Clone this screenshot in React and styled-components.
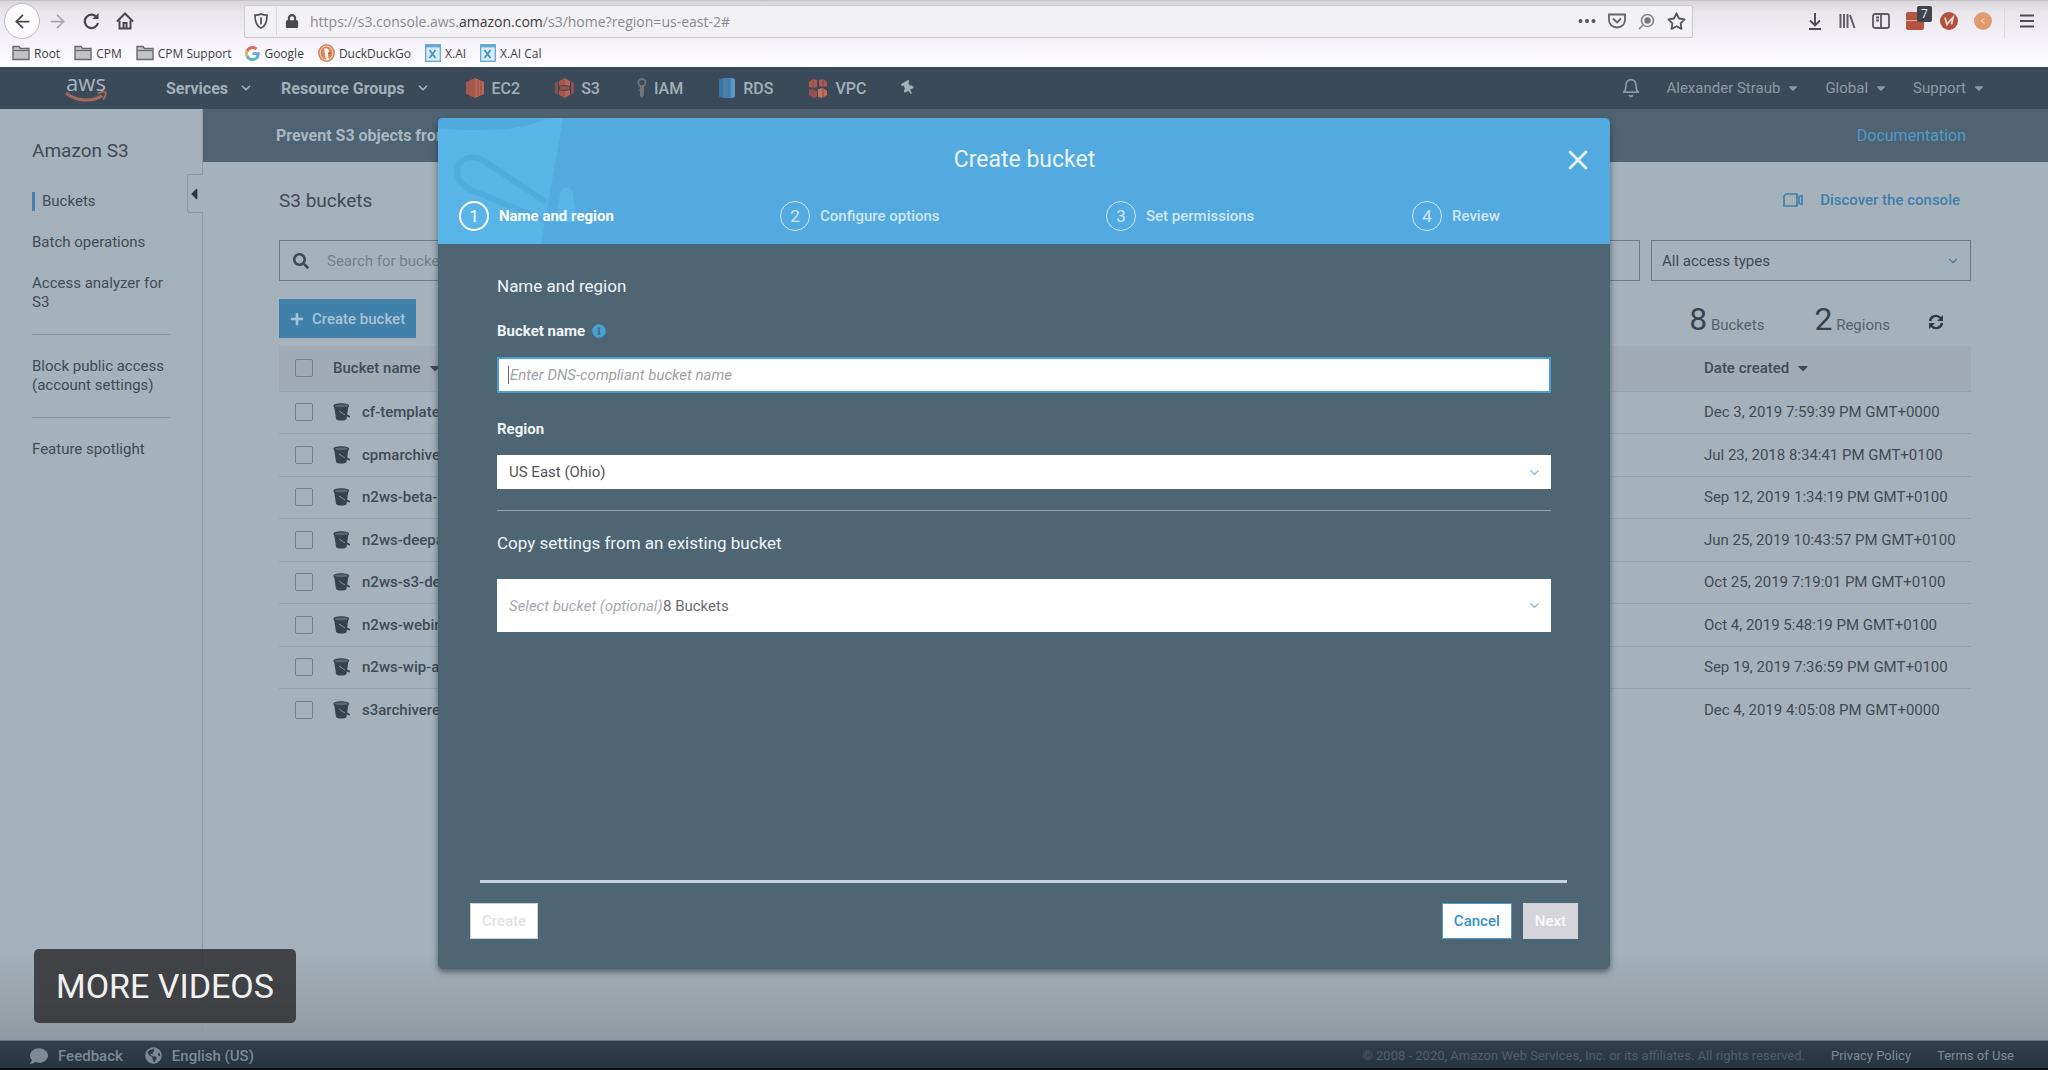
import React from "react";
import styled, { createGlobalStyle } from "styled-components";
import {
  FaCaretDown,
  FaCaretLeft,
  FaComment,
  FaGlobeAmericas,
  FaInfoCircle,
  FaLock,
  FaPlus,
  FaSearch,
  FaThumbtack,
} from "react-icons/fa";
import { FiArrowLeft, FiArrowRight, FiBell, FiChevronDown, FiX } from "react-icons/fi";

const bookmarks = [
  { name: "Root", icon: "folder" },
  { name: "CPM", icon: "folder" },
  { name: "CPM Support", icon: "folder" },
  { name: "Google", icon: "google" },
  { name: "DuckDuckGo", icon: "duck" },
  { name: "X.AI", icon: "xai" },
  { name: "X.AI Cal", icon: "xai" },
];

const services = ["EC2", "S3", "IAM", "RDS", "VPC"];

const buckets = [
  { name: "cf-template", date: "Dec 3, 2019 7:59:39 PM GMT+0000" },
  { name: "cpmarchive", date: "Jul 23, 2018 8:34:41 PM GMT+0100" },
  { name: "n2ws-beta-", date: "Sep 12, 2019 1:34:19 PM GMT+0100" },
  { name: "n2ws-deepa", date: "Jun 25, 2019 10:43:57 PM GMT+0100" },
  { name: "n2ws-s3-de", date: "Oct 25, 2019 7:19:01 PM GMT+0100" },
  { name: "n2ws-webin", date: "Oct 4, 2019 5:48:19 PM GMT+0100" },
  { name: "n2ws-wip-a", date: "Sep 19, 2019 7:36:59 PM GMT+0100" },
  { name: "s3archivere", date: "Dec 4, 2019 4:05:08 PM GMT+0000" },
];

const steps = ["Name and region", "Configure options", "Set permissions", "Review"];

const BookmarkIcon = ({ type }) => {
  if (type === "folder") {
    return (
      <svg width="18" height="16" viewBox="0 0 18 16">
        <path d="M1 14.5V1.5h6l1.5 2H17v11z" fill="#c3c2c6" stroke="#6b6a70" strokeWidth="1.4" />
        <path d="M1.5 5.5h15" stroke="#6b6a70" strokeWidth="1.2" />
      </svg>
    );
  }
  if (type === "google") {
    return (
      <svg width="15" height="15" viewBox="0 0 48 48">
        <path fill="#dd6b5e" d="M24 9.500c3.500 0 6.700 1.200 9.200 3.600l6.900-6.900C35.900 2.400 30.500 0 24 0 14.600 0 6.500 5.400 2.600 13.200l8 6.200C12.400 13.700 17.700 9.500 24 9.500z" />
        <path fill="#6aa5d8" d="M47 24.600c0-1.600-.2-3.100-.4-4.600H24v9h12.900c-.6 3-2.200 5.500-4.700 7.200l7.700 6C44.400 38 47 31.800 47 24.600z" />
        <path fill="#e2b45a" d="M10.500 28.600A14.500 14.500 0 0 1 10.500 19.400l-8-6.200a24 24 0 0 0 0 21.600z" />
        <path fill="#6ab0b8" d="M24 48c6.500 0 11.900-2.100 15.900-5.800l-7.700-6c-2.200 1.500-4.900 2.300-8.200 2.300-6.300 0-11.600-4.200-13.500-9.900l-8 6.200C6.500 42.600 14.600 48 24 48z" />
      </svg>
    );
  }
  if (type === "duck") {
    return (
      <svg width="17" height="18" viewBox="0 0 17 18">
        <ellipse cx="8.500" cy="9" rx="8.500" ry="9" fill="#d9865f" />
        <ellipse cx="8.500" cy="9" rx="6.400" ry="7" fill="none" stroke="#f3d9cc" strokeWidth="1" />
        <path d="M6 4.500c3-1 5.500.5 5 4-.3 1.500-1 2-1 3l1 4-3 .5z" fill="#fbf3ee" />
        <path d="M10 8.500h3v1.500h-3z" fill="#c65b3a" />
      </svg>
    );
  }
  return (
    <svg width="16" height="18" viewBox="0 0 16 18">
      <rect x=".7" y=".7" width="14.600" height="16.600" fill="#dcecf6" stroke="#62a9d4" strokeWidth="1.300" />
      <path d="M1 2.200h14" stroke="#62a9d4" strokeWidth="2.400" />
      <path d="M4.500 6l6 8M10.500 6l-6 8" stroke="#3f93c8" strokeWidth="1.800" />
    </svg>
  );
};

const ServiceIcon = ({ name }) => {
  switch (name) {
    case "EC2":
      return (
        <svg width="20" height="20" viewBox="0 0 20 20">
          <path d="M10 0l9 4v12l-9 4-9-4V4z" fill="#a4564f" />
          <path d="M10 0l9 4v12l-9 4z" fill="#bb6555" />
          <path d="M13 2.500v15M16 3.500v13" stroke="#8c4d4b" strokeWidth="1" />
        </svg>
      );
    case "S3":
      return (
        <svg width="19" height="20" viewBox="0 0 19 20">
          <path d="M0 5l3-1.500v13L0 15zM19 5l-3-1.500v13l3-1.500z" fill="#8d4f4e" />
          <path d="M9.500 0L4 3v5l5.500-1zM9.500 20L4 17v-5l5.500 1z" fill="#a9574d" />
          <path d="M9.500 0L15 3v5l-5.500-1zM9.500 20l5.500-3v-5l-5.500 1z" fill="#bb6153" />
          <path d="M5 8.500l4.500-.5 4.500.5v3l-4.500.5-4.500-.5z" fill="#98504c" />
        </svg>
      );
    case "IAM":
      return (
        <svg width="12" height="20" viewBox="0 0 12 20">
          <circle cx="7" cy="4.500" r="3.600" fill="none" stroke="#6c7277" strokeWidth="2" />
          <path d="M5 7.500h4V17l-2 3-2-2z" fill="#71777c" />
          <path d="M3 9h2M3 12h2" stroke="#5d666e" strokeWidth="1.500" />
        </svg>
      );
    case "RDS":
      return (
        <svg width="18" height="22" viewBox="0 0 18 22">
          <path d="M1 2.500L5 1h9l3 1.500v17L14 21H5l-4-1.500z" fill="#3f73a0" />
          <path d="M5 1h8v20H5z" fill="#467fae" />
          <path d="M13 1h1l3 1.500v17L14 21h-1z" fill="#5c9bc6" />
        </svg>
      );
    default:
      return (
        <svg width="20" height="21" viewBox="0 0 20 21">
          <path d="M1 4l4-3 4 1v7L5 10 1 9zM11 2l4-1 4 3v4l-4 1-4-1z" fill="#ad5a51" />
          <path d="M1 11l5 1 3 1v6l-3 1-5-3z" fill="#9b504d" />
          <path d="M10 11l5-1 4 3v4l-5 3-4-1z" fill="#c57059" />
          <path d="M5 1v19M15 1v19" stroke="#84494c" strokeWidth="1" />
        </svg>
      );
  }
};

const BucketIcon = () => (
  <svg width="18" height="18" viewBox="0 0 18 18">
    <path d="M1 2.500l2 13.500c1.500 2 9 2 10.500 0L15.500 2.500z" fill="#36434d" />
    <ellipse cx="8.250" cy="2.800" rx="7.300" ry="2" fill="#5b6973" stroke="#36434d" strokeWidth="1.200" />
    <path d="M8 9l8 4.500" stroke="#36434d" strokeWidth="2" strokeLinecap="round" />
    <path d="M6 8l6 4" stroke="#85929b" strokeWidth="1" />
  </svg>
);

const App = () => {
  return (
    <Page>
      <GlobalStyle />

      <Browser>
        <Toolbar>
          <BackButton aria-label="Back">
            <FiArrowLeft size={21} />
          </BackButton>
          <ToolButton aria-label="Forward" $color="#a9a8ae">
            <FiArrowRight size={21} />
          </ToolButton>
          <ToolButton aria-label="Reload">
            <svg width="17" height="18" viewBox="0 0 17 18" fill="none" stroke="currentColor" strokeWidth="2.200">
              <path d="M14 5.500A6.700 6.700 0 1 0 15 11" />
              <path d="M15.500 1v6H9.500z" fill="currentColor" stroke="none" />
            </svg>
          </ToolButton>
          <ToolButton aria-label="Home">
            <svg width="18" height="18" viewBox="0 0 18 18" fill="none" stroke="currentColor" strokeWidth="2">
              <path d="M1 9.500L9 1.500l8 8" />
              <path d="M3.500 8.500V16.500h11V8.500" />
              <path d="M7.500 16v-5h3v5" />
            </svg>
          </ToolButton>
          <AddressBar>
            <svg width="14" height="16" viewBox="0 0 14 16" fill="none" stroke="#504f56" strokeWidth="1.700">
              <path d="M1 2.200C4 2.200 5.500 1.800 7 1c1.500.8 3 1.200 6 1.200C13 8.500 12 13 7 15 2 13 1 8.500 1 2.200z" />
              <path d="M7 4.500v7" />
            </svg>
            <Separator />
            <FaLock size={14} color="#4a494f" />
            <Url>
              https://s3.console.aws.<b>amazon.com</b>/s3/home?region=us-east-2#
            </Url>
            <UrlActions>
              <svg width="18" height="18" viewBox="0 0 18 18" fill="#55545b">
                <circle cx="2.500" cy="9" r="2" />
                <circle cx="9" cy="9" r="2" />
                <circle cx="15.500" cy="9" r="2" />
              </svg>
              <svg width="18" height="16" viewBox="0 0 18 16" fill="none" stroke="#66656b" strokeWidth="1.800">
                <path d="M1 1.500h16V7c0 4.500-3.500 7.500-8 7.500S1 11.500 1 7z" />
                <path d="M5 5.500l4 4 4-4" />
              </svg>
              <svg width="17" height="17" viewBox="0 0 17 17" fill="none" stroke="#89888e" strokeWidth="1.700">
                <circle cx="9.500" cy="7.500" r="6" />
                <path d="M5 12l-4 4" />
                <circle cx="9.500" cy="7.500" r="3.200" fill="#77767c" stroke="none" />
              </svg>
              <svg width="19" height="18" viewBox="0 0 19 18" fill="none" stroke="#55545b" strokeWidth="1.800" strokeLinejoin="round">
                <path d="M9.500 1.300l2.500 5.200 5.600.8-4 4 .9 5.600-5-2.700-5 2.700.9-5.600-4-4 5.600-.8z" />
              </svg>
            </UrlActions>
          </AddressBar>
          <Extensions>
            <svg width="16" height="17" viewBox="0 0 16 17" fill="none" stroke="#4c4b52" strokeWidth="1.900">
              <path d="M8 0v12M3 7.500l5 5 5-5M2 16h12" />
            </svg>
            <svg width="17" height="16" viewBox="0 0 17 16" fill="none" stroke="#5f5e64" strokeWidth="2">
              <path d="M1.500 1v14M5 1v14M8.500 1v14M11 2l4.500 13" />
            </svg>
            <svg width="18" height="16" viewBox="0 0 18 16" fill="none" stroke="#5b5a61" strokeWidth="1.800">
              <rect x="1" y="1" width="16" height="14" rx="2" />
              <path d="M9 1v14M4 4.500h3M4 7.500h3" />
            </svg>
            <Blocker>
              <BlockerCount>7</BlockerCount>
            </Blocker>
            <svg width="18" height="18" viewBox="0 0 18 18">
              <circle cx="9" cy="9" r="9" fill="#b3503f" />
              <path d="M5 5.500l2 7 3-4 3-3-1.500 7" fill="none" stroke="#f2d8d0" strokeWidth="1.800" />
            </svg>
            <svg width="18" height="18" viewBox="0 0 18 18">
              <circle cx="9" cy="9" r="9" fill="#e09a70" />
              <path d="M10.500 6.500L7.500 9l3 2.500" fill="none" stroke="#f1c6ab" strokeWidth="1.500" />
            </svg>
            <MenuButton aria-label="Open menu">
              <svg width="14" height="14" viewBox="0 0 14 14" stroke="#4c4b52" strokeWidth="2">
                <path d="M0 1.500h14M0 7h14M0 12.500h14" />
              </svg>
            </MenuButton>
          </Extensions>
        </Toolbar>
        <Bookmarks>
          {bookmarks.map((item) => (
            <Bookmark href="#" key={item.name}>
              <BookmarkIcon type={item.icon} />
              {item.name}
            </Bookmark>
          ))}
        </Bookmarks>
      </Browser>

      <Nav>
        <Logo href="#">
          aws
          <svg width="44" height="12" viewBox="0 0 44 12" fill="none">
            <path d="M2 2c11 9 27 9 36 2.500" stroke="#a5675c" strokeWidth="3" />
            <path d="M34 2.500c4-2 7-2 7.500-1s0 4-2.500 7" stroke="#a5675c" strokeWidth="2" />
          </svg>
        </Logo>
        <NavMenu>
          <NavButton>
            Services <FiChevronDown size={14} strokeWidth={3} />
          </NavButton>
          <NavButton>
            Resource Groups <FiChevronDown size={14} strokeWidth={3} />
          </NavButton>
        </NavMenu>
        <Shortcuts>
          {services.map((name) => (
            <Shortcut href="#" key={name}>
              <ServiceIcon name={name} />
              {name}
            </Shortcut>
          ))}
          <Pin aria-label="Edit shortcuts">
            <FaThumbtack size={14} />
          </Pin>
        </Shortcuts>
        <Account>
          <FiBell size={20} />
          <AccountButton>
            Alexander Straub <FaCaretDown size={14} />
          </AccountButton>
          <AccountButton>
            Global <FaCaretDown size={14} />
          </AccountButton>
          <AccountButton>
            Support <FaCaretDown size={14} />
          </AccountButton>
        </Account>
      </Nav>

      <Body>
        <Sidebar>
          <SidebarTitle>Amazon S3</SidebarTitle>
          <SideLink href="#" $active>
            Buckets
          </SideLink>
          <SideLink href="#">Batch operations</SideLink>
          <SideLink href="#">Access analyzer for S3</SideLink>
          <SideRule />
          <SideLink href="#">Block public access (account settings)</SideLink>
          <SideRule />
          <SideLink href="#">Feature spotlight</SideLink>
          <Collapse aria-label="Collapse menu">
            <FaCaretLeft size={18} />
          </Collapse>
        </Sidebar>

        <Main>
          <Banner>
            <b>Prevent S3 objects from</b>
            <a href="#">Documentation</a>
          </Banner>
          <Content>
            <TitleRow>
              <h1>S3 buckets</h1>
              <Discover href="#">
                <svg width="20" height="14" viewBox="0 0 20 14" fill="none" stroke="currentColor" strokeWidth="1.600">
                  <path d="M3 1h11v12H1V3z" />
                  <path d="M16 3.500l3-1v9l-3-1z" />
                </svg>
                Discover the console
              </Discover>
            </TitleRow>
            <Filters>
              <SearchBox>
                <FaSearch size={16} />
                <input aria-label="Search for buckets" placeholder="Search for buckets" />
              </SearchBox>
              <AccessSelect>
                <select aria-label="Access type">
                  <option>All access types</option>
                </select>
                <FiChevronDown size={14} />
              </AccessSelect>
            </Filters>
            <Actions>
              <CreateBucket>
                <FaPlus size={14} /> Create bucket
              </CreateBucket>
              <Stats>
                <Stat>
                  <b>8</b> Buckets
                </Stat>
                <Stat>
                  <b>2</b> Regions
                </Stat>
                <Refresh aria-label="Refresh">
                  <svg width="16" height="16" viewBox="0 0 16 16" fill="none" stroke="currentColor" strokeWidth="2.400">
                    <path d="M2 7a6 6 0 0 1 10.500-3M14 9a6 6 0 0 1-10.500 3" />
                    <path d="M15 1v6H9zM1 15V9h6z" fill="currentColor" stroke="none" />
                  </svg>
                </Refresh>
              </Stats>
            </Actions>
            <Table>
              <thead>
                <tr>
                  <CheckCell as="th">
                    <Check type="checkbox" aria-label="Select all buckets" />
                  </CheckCell>
                  <th>
                    <HeadLabel>
                      Bucket name <FaCaretDown size={16} />
                    </HeadLabel>
                  </th>
                  <DateCell as="th">
                    <HeadLabel>
                      Date created <FaCaretDown size={16} />
                    </HeadLabel>
                  </DateCell>
                </tr>
              </thead>
              <tbody>
                {buckets.map((bucket) => (
                  <tr key={bucket.name}>
                    <CheckCell>
                      <Check type="checkbox" aria-label={bucket.name} />
                    </CheckCell>
                    <td>
                      <BucketLink href="#">
                        <BucketIcon />
                        {bucket.name}
                      </BucketLink>
                    </td>
                    <DateCell>{bucket.date}</DateCell>
                  </tr>
                ))}
              </tbody>
            </Table>
          </Content>
        </Main>
      </Body>

      <Footer>
        <FooterLink href="#" $strong>
          <FaComment size={18} /> Feedback
        </FooterLink>
        <FooterLink href="#" $strong>
          <FaGlobeAmericas size={17} /> English (US)
        </FooterLink>
        <Legal>
          <span>© 2008 - 2020, Amazon Web Services, Inc. or its affiliates. All rights reserved.</span>
          <FooterLink href="#">Privacy Policy</FooterLink>
          <FooterLink href="#">Terms of Use</FooterLink>
        </Legal>
      </Footer>

      <Overlay>
        <Modal role="dialog" aria-labelledby="modal-title">
          <ModalHeader>
            <HeaderArt width="140" height="126" viewBox="0 0 140 126" fill="none">
              <path d="M0 0h125l-22 126H0z" fill="#59b5e8" />
              <path d="M0 0h108C90 13 30 14 0 10z" fill="#50a9df" />
              <path
                d="M108 84L46 43C34 35 18 41 19 55c1 8 6 13 14 17l88 36"
                stroke="#52abe0"
                strokeWidth="6"
              />
              <path d="M118 104l4-28c1-9 12-9 13 0l4 28z" fill="#59b5e8" />
            </HeaderArt>
            <h2 id="modal-title">Create bucket</h2>
            <Close aria-label="Close">
              <FiX size={32} strokeWidth={2} />
            </Close>
            <Steps>
              {steps.map((step, i) => (
                <Step key={step} $active={i === 0}>
                  <StepNumber $active={i === 0}>{i + 1}</StepNumber>
                  {step}
                </Step>
              ))}
            </Steps>
          </ModalHeader>

          <ModalBody>
            <SectionTitle>Name and region</SectionTitle>
            <Label htmlFor="bucket-name">
              Bucket name <FaInfoCircle size={14} color="#4a9fd4" />
            </Label>
            <NameInput id="bucket-name" placeholder="Enter DNS-compliant bucket name" />
            <Label htmlFor="region">Region</Label>
            <Field>
              <select id="region">
                <option>US East (Ohio)</option>
              </select>
              <FiChevronDown size={15} />
            </Field>
            <Rule />
            <SectionTitle as="label" htmlFor="copy-from">
              Copy settings from an existing bucket
            </SectionTitle>
            <Field $tall>
              <select id="copy-from">
                <option>Select bucket (optional)</option>
              </select>
              <span>8 Buckets</span>
              <FiChevronDown size={15} />
            </Field>
          </ModalBody>

          <ModalFooter>
            <ModalButton disabled $color="#e2e2e6">
              Create
            </ModalButton>
            <ModalButton $color="#3c8fc4" $border="#4a9fd4">
              Cancel
            </ModalButton>
            <ModalButton disabled $color="#f8f8fa" $bg="#d5d4da">
              Next
            </ModalButton>
          </ModalFooter>
        </Modal>
      </Overlay>

      <MoreVideos>MORE VIDEOS</MoreVideos>
    </Page>
  );
};

const GlobalStyle = createGlobalStyle`
  * {
    box-sizing: border-box;
  }
  body {
    margin: 0;
    background: #a6b2bb;
    color: #3f4b55;
    font-family: Roboto, "Liberation Sans", sans-serif;
    font-size: 15px;
  }
  h1, h2, h3 {
    margin: 0;
    font-weight: 400;
  }
  a {
    color: inherit;
    text-decoration: none;
  }
  button, input, select {
    margin: 0;
    padding: 0;
    border: none;
    background: none;
    color: inherit;
    font: inherit;
  }
  select {
    appearance: none;
  }
  svg {
    flex: none;
  }
`;

const Page = styled.div`
  position: relative;
  display: flex;
  flex-direction: column;
  min-height: 100vh;
`;

const Browser = styled.header`
  background: linear-gradient(#d9d6dc, #e9e7ec 12px, #f5f3f9 40px, #fdfcff);
  border-top: 1px solid #c4c1c8;
  font-family: "Open Sans", "Noto Sans", sans-serif;
`;

const Toolbar = styled.div`
  display: flex;
  align-items: center;
  height: 40px;
  padding: 0 14px 0 4px;
  color: #47464c;
`;

const ToolButton = styled.button`
  display: flex;
  align-items: center;
  justify-content: center;
  width: 34px;
  height: 34px;
  color: ${(props) => props.$color || "#47464c"};
`;

const BackButton = styled(ToolButton)`
  width: 36px;
  height: 36px;
  border: 1px solid #bdbbc1;
  border-radius: 50%;
  background: #fbfafc;
`;

const AddressBar = styled.div`
  display: flex;
  flex: 1;
  align-items: center;
  gap: 8px;
  height: 33px;
  margin: 0 114px 0 102px;
  padding: 0 6px 0 9px;
  border: 1px solid #cbc9cf;
  border-radius: 2px;
  background: #f2f1f3;
`;

const Separator = styled.span`
  width: 1px;
  height: 28px;
  background: #dcdadf;
`;

const Url = styled.span`
  flex: 1;
  padding-left: 3px;
  color: #8b8a90;
  font-size: 14px;

  b {
    color: #3c3b41;
    font-weight: 500;
  }
`;

const UrlActions = styled.div`
  display: flex;
  align-items: center;
  gap: 12px;
`;

const Extensions = styled.div`
  display: flex;
  align-items: center;
  gap: 16px;
`;

const MenuButton = styled.button`
  display: flex;
  align-items: center;
  height: 34px;
  margin-left: -4px;
  padding-left: 15px;
  border-left: 1px solid #dcdadf;
`;

const Blocker = styled.span`
  position: relative;
  width: 18px;
  height: 18px;
  border-radius: 2px;
  background: linear-gradient(#b5533f 8px, #e2b0a2 8px, #e2b0a2 9px, #b5533f 9px);
`;

const BlockerCount = styled.span`
  position: absolute;
  top: -6px;
  left: 11px;
  width: 15px;
  height: 16px;
  border-radius: 2px;
  background: #3d444c;
  color: #f1f1f3;
  font-size: 12px;
  line-height: 16px;
  text-align: center;
`;

const Bookmarks = styled.nav`
  display: flex;
  align-items: center;
  gap: 14px;
  height: 26px;
  padding: 0 12px 2px;
`;

const Bookmark = styled.a`
  display: flex;
  align-items: center;
  gap: 4px;
  color: #3f3e44;
  font-size: 12px;
`;

const Nav = styled.nav`
  display: flex;
  align-items: center;
  height: 42px;
  padding: 0 62px 0 64px;
  background: #3a4a58;
  color: #a3b0ba;
  font-size: 16px;
`;

const Logo = styled.a`
  display: flex;
  flex-direction: column;
  align-items: center;
  width: 44px;
  color: #a9b5be;
  font-family: "Open Sans", sans-serif;
  font-size: 22px;
  font-weight: 500;
  line-height: 18px;
`;

const NavMenu = styled.div`
  display: flex;
  gap: 28px;
  padding: 0 35px 0 58px;
`;

const NavButton = styled.button`
  display: flex;
  align-items: center;
  gap: 11px;
  font-weight: 700;
`;

const Shortcuts = styled.div`
  display: flex;
  align-items: center;
  gap: 35px;
`;

const Shortcut = styled.a`
  display: flex;
  align-items: center;
  gap: 7px;
  font-weight: 500;
`;

const Pin = styled.button`
  display: flex;
  transform: rotate(-30deg);
`;

const Account = styled.div`
  display: flex;
  align-items: center;
  gap: 25px;
  margin-left: auto;
  color: #8b99a4;
`;

const AccountButton = styled.button`
  display: flex;
  align-items: center;
  gap: 6px;
  font-size: 15px;
`;

const Body = styled.div`
  display: flex;
  flex: 1;
  background: linear-gradient(transparent calc(100% - 90px), #8f99a2);
`;

const Sidebar = styled.aside`
  position: relative;
  width: 203px;
  padding: 30px 32px;
  border-right: 1px solid #8d99a3;
`;

const SidebarTitle = styled.h2`
  margin-bottom: 29px;
  font-size: 19px;
  line-height: 24px;
`;

const SideLink = styled.a`
  display: block;
  margin-bottom: 22px;
  padding-left: ${(props) => (props.$active ? "7px" : "0")};
  border-left: ${(props) => (props.$active ? "3px solid #4382ae" : "none")};
  line-height: 19px;
`;

const SideRule = styled.hr`
  height: 1px;
  margin: 0 0 22px;
  border: none;
  background: #87939d;
`;

/* sits on the sidebar's right border */
const Collapse = styled.button`
  position: absolute;
  top: 65px;
  right: -1px;
  display: flex;
  align-items: center;
  justify-content: flex-end;
  width: 16px;
  height: 39px;
  border: 1px solid #8d99a3;
  border-right: none;
  border-radius: 3px 0 0 3px;
  background: #a6b2bb;
  color: #2c3740;
`;

const Main = styled.main`
  flex: 1;
`;

const Banner = styled.div`
  display: flex;
  align-items: center;
  justify-content: space-between;
  height: 53px;
  padding: 0 82px 0 73px;
  background: #4f6372;
  color: #a9b7c1;
  font-size: 16px;

  b {
    font-weight: 700;
  }
  a {
    color: #4d9acb;
  }
`;

const Content = styled.div`
  padding: 26px 77px 0 76px;
`;

const TitleRow = styled.div`
  display: flex;
  align-items: center;
  justify-content: space-between;
  height: 24px;
  padding-right: 11px;

  h1 {
    font-size: 19px;
  }
`;

const Discover = styled.a`
  display: flex;
  align-items: center;
  gap: 17px;
  color: #3f7fab;
  font-weight: 500;
`;

const Filters = styled.div`
  display: flex;
  gap: 11px;
  margin-top: 28px;
`;

const SearchBox = styled.div`
  display: flex;
  flex: 1;
  align-items: center;
  gap: 18px;
  height: 41px;
  padding: 0 13px;
  border: 1px solid #6d7983;

  input {
    flex: 1;
    outline: none;
  }
  input::placeholder {
    color: #74808a;
  }
`;

const AccessSelect = styled.div`
  display: flex;
  align-items: center;
  width: 320px;
  height: 41px;
  padding: 0 10px;
  border: 1px solid #6d7983;

  select {
    flex: 1;
  }
  svg {
    color: #3f7fab;
  }
`;

const Actions = styled.div`
  display: flex;
  align-items: center;
  justify-content: space-between;
  margin-top: 18px;
`;

const CreateBucket = styled.button`
  display: flex;
  align-items: center;
  gap: 8px;
  height: 39px;
  padding: 0 11px;
  background: #4180aa;
  color: #a9c3d6;
  font-weight: 500;
`;

const Stats = styled.div`
  display: flex;
  align-items: baseline;
  gap: 50px;
  padding-right: 27px;
`;

const Stat = styled.span`
  color: #56636d;

  b {
    color: #36424c;
    font-size: 32px;
    font-weight: 400;
  }
`;

const Refresh = styled.button`
  color: #2f3a43;
  margin-left: -12px;
`;

const Table = styled.table`
  width: 100%;
  margin-top: 8px;
  border-collapse: collapse;

  th {
    height: 45px;
    padding: 0;
    background: #a1abb5;
    font-weight: 500;
    text-align: left;
  }
  td {
    height: 43px;
    padding: 0;
  }
  tr:nth-child(odd) td {
    height: 42px;
  }
  thead tr,
  tbody tr:not(:last-child) {
    border-bottom: 1px solid #95a1ab;
  }
`;

const CheckCell = styled.td`
  width: 54px;
`;

const DateCell = styled.td`
  width: 267px;
`;

const HeadLabel = styled.span`
  display: flex;
  align-items: center;
  gap: 6px;
`;

const Check = styled.input`
  display: block;
  width: 18px;
  height: 18px;
  margin-left: 16px;
  appearance: none;
  border: 1px solid #74808a;
  border-radius: 2px;
`;

const BucketLink = styled.a`
  display: flex;
  align-items: center;
  gap: 11px;
  font-weight: 500;
`;

const Footer = styled.footer`
  display: flex;
  align-items: center;
  gap: 22px;
  height: 30px;
  padding: 2px 34px 0 30px;
  border-top: 1px solid #6a757e;
  border-bottom: 2px solid #0a0d10;
  background: linear-gradient(#323f4b, #28343e);
`;

const FooterLink = styled.a`
  display: flex;
  align-items: center;
  gap: 10px;
  color: #7d8a94;
  font-size: ${(props) => (props.$strong ? "15px" : "13px")};
  font-weight: ${(props) => (props.$strong ? 500 : 400)};
`;

const Legal = styled.div`
  display: flex;
  align-items: center;
  gap: 26px;
  margin-left: auto;
  color: #505e69;
  font-size: 13px;
`;

const Overlay = styled.div`
  position: absolute;
  inset: 0;
  display: flex;
  align-items: flex-start;
  justify-content: center;
  padding-top: 118px;
`;

const Modal = styled.section`
  display: flex;
  flex-direction: column;
  width: 1172px;
  max-width: 90%;
  border-radius: 5px;
  overflow: hidden;
  background: #4e6573;
  box-shadow: 0 3px 6px rgba(30, 40, 50, 0.6);
`;

const ModalHeader = styled.header`
  position: relative;
  padding: 27px 20px 13px 21px;
  background: #52aae0;
  color: #e9f4fb;

  h2 {
    position: relative;
    font-size: 23px;
    line-height: 30px;
    text-align: center;
  }
`;

const HeaderArt = styled.svg`
  position: absolute;
  top: 0;
  left: 0;
`;

const Close = styled.button`
  position: absolute;
  top: 26px;
  right: 16px;
  display: flex;
`;

const Steps = styled.ol`
  position: relative;
  display: grid;
  grid-template-columns: 321fr 326fr 306fr 178fr;
  margin: 26px 0 0;
  padding: 0;
  list-style: none;
`;

const Step = styled.li`
  display: flex;
  align-items: center;
  gap: 10px;
  color: ${(props) => (props.$active ? "#ffffff" : "#cfe7f6")};
  font-weight: ${(props) => (props.$active ? 700 : 500)};
`;

const StepNumber = styled.span`
  width: 30px;
  height: 30px;
  border: ${(props) => (props.$active ? "2px" : "1px")} solid currentColor;
  border-radius: 50%;
  font-size: 17px;
  font-weight: 400;
  line-height: ${(props) => (props.$active ? "26px" : "28px")};
  text-align: center;
`;

const ModalBody = styled.div`
  display: flex;
  flex-direction: column;
  min-height: 636px;
  padding: 30px 59px 0;
  color: #f0f5f8;
`;

const SectionTitle = styled.h3`
  font-size: 17px;
  line-height: 24px;
`;

const Label = styled.label`
  display: flex;
  align-items: center;
  gap: 7px;
  margin: 23px 0 16px;
  font-weight: 700;
  line-height: 20px;

  input + & {
    margin-top: 26px;
  }
`;

/* the caret at the start of the field is painted as a 1px line */
const NameInput = styled.input`
  height: 36px;
  padding: 0 11px;
  border: 2px solid #4a9fd4;
  background: linear-gradient(#6b6a70, #6b6a70) 9px center / 1px 18px no-repeat #ffffff;
  color: #444;

  &::placeholder {
    color: #a09fa6;
    font-style: italic;
  }
`;

const Field = styled.div`
  display: flex;
  align-items: center;
  height: ${(props) => (props.$tall ? "53px" : "34px")};
  padding: 0 9px 0 12px;
  background: #ffffff;
  color: #6d6c72;

  select {
    flex: ${(props) => (props.$tall ? "none" : "1")};
    color: ${(props) => (props.$tall ? "#a9a8af" : "#55545a")};
    font-style: ${(props) => (props.$tall ? "italic" : "normal")};
  }
  svg {
    margin-left: auto;
    color: #8fb0c5;
  }
`;

const Rule = styled.hr`
  width: 100%;
  height: 1px;
  margin: 21px 0 20px;
  border: none;
  background: #97a5af;

  & + label {
    margin-bottom: 24px;
  }
`;

const ModalFooter = styled.footer`
  display: flex;
  gap: 11px;
  padding: 20px 32px 30px;
  border-top: 3px solid #c3d3df;
  border-image: linear-gradient(90deg, transparent 45px, #c3d3df 45px, #c3d3df calc(100% - 46px), transparent calc(100% - 46px)) 3;

  button:first-child {
    margin-right: auto;
  }
`;

const ModalButton = styled.button`
  height: 36px;
  padding: 0 11px;
  border: 1px solid ${(props) => props.$border || "#cfd2d8"};
  background: ${(props) => props.$bg || "#ffffff"};
  color: ${(props) => props.$color};
  font-weight: 500;
`;

const MoreVideos = styled.button`
  position: absolute;
  bottom: 47px;
  left: 34px;
  height: 74px;
  padding: 0 22px;
  border-radius: 5px;
  background: rgba(40, 40, 43, 0.8);
  color: #f1f1f1;
  font-size: 34px;
`;

export default App;
